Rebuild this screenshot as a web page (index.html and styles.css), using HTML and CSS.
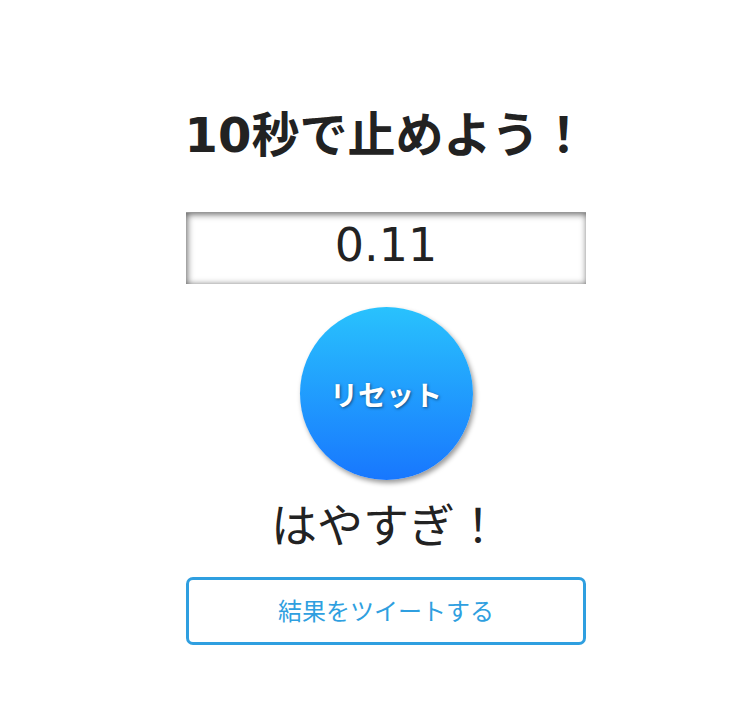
FILE: index.html
```html
<!DOCTYPE html>
<html lang="ja">
<head>
<meta charset="utf-8">
<title>10秒で止めよう！</title>
<link rel="stylesheet" href="styles.css">
</head>
<body>
<main class="game">
  <h1 class="title">10秒で止めよう！</h1>
  <div class="timer">0.11</div>
  <button class="reset">リセット</button>
  <p class="result">はやすぎ！</p>
  <a class="tweet" href="#">結果をツイートする</a>
</main>
</body>
</html>
```

FILE: styles.css
```css
html, body {
  margin: 0;
  padding: 0;
  background: #ffffff;
}
body {
  font-family: "Noto Sans CJK JP", "Noto Sans", sans-serif;
  color: #222222;
}
.game {
  display: flex;
  flex-direction: column;
  align-items: center;
  padding-top: 111px;
  padding-left: 20px;
}
.title {
  margin: 0;
  font-family: "DejaVu Sans", "Noto Sans CJK JP", sans-serif;
  font-size: 48px;
  line-height: 48px;
  font-weight: 700;
  color: #222222;
}
.timer {
  margin-top: 53px;
  width: 400px;
  height: 72px;
  box-sizing: border-box;
  font-family: "DejaVu Sans", sans-serif;
  font-size: 46px;
  line-height: 64px;
  text-align: center;
  color: #222222;
  box-shadow: inset 1px 1px 7px rgba(0,0,0,0.65);
  border-top: 1px solid #999;
}
.reset {
  margin-top: 23px;
  width: 173px;
  height: 173px;
  border: none;
  border-radius: 50%;
  background: linear-gradient(to bottom, #29c2fd, #1877fe);
  box-shadow: 2px 3px 5px rgba(0,0,0,0.4);
  color: #ffffff;
  font-family: "Noto Sans CJK JP", sans-serif;
  font-size: 28px;
  font-weight: 700;
  text-shadow: 1px 1px 3px rgba(0,0,0,0.5);
  padding: 0;
  cursor: pointer;
}
.result {
  margin: 19px 0 0;
  font-size: 46px;
  line-height: 46px;
  color: #222222;
}
.tweet {
  margin-top: 32px;
  width: 400px;
  height: 68px;
  box-sizing: border-box;
  border: 3px solid #2f9fe0;
  border-radius: 7px;
  display: flex;
  align-items: center;
  justify-content: center;
  padding-bottom: 4px;
  font-size: 24px;
  color: #2f9fe0;
  text-decoration: none;
}
```
